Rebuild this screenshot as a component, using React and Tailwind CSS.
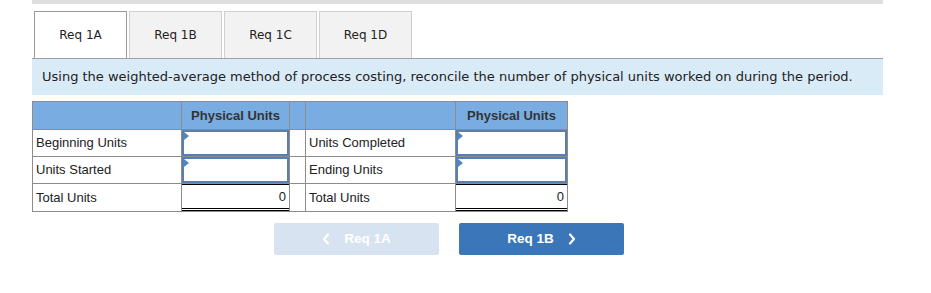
import React from "react";

const tabs = ["Req 1A", "Req 1B", "Req 1C", "Req 1D"];

const Chevron = ({ dir }) => (
  <svg width="8" height="12" viewBox="0 0 8 12" fill="none">
    <path
      d={dir === "left" ? "M6 1.5 L2 6 L6 10.5" : "M2 1.5 L6 6 L2 10.5"}
      stroke="white"
      strokeWidth="2.2"
      strokeLinecap="round"
      strokeLinejoin="round"
    />
  </svg>
);

const InputCell = () => (
  <td className="border border-[#8c8c8c] p-0 h-[27px]">
    <div className="relative h-full border-2 border-[#5a7fae] bg-white">
      <span className="absolute left-0 top-0 w-0 h-0 border-y-[4px] border-y-transparent border-l-[5px] border-l-[#4a86c8]" />
    </div>
  </td>
);

const TotalCell = () => (
  <td className="border border-[#8c8c8c] p-0">
    <div className="h-[27px] border-t border-black border-b-[3px] border-b-black [border-bottom-style:double] flex items-center justify-end pr-[3px]">
      0
    </div>
  </td>
);

export default function App() {
  return (
    <div className="w-[931px] h-[293px] bg-white pl-[32px] pr-[48px]">
      <div className="h-[4px] bg-[#dedede]" />

      {/* TABS */}
      <div className="flex gap-[2px] pl-[2px] mt-[7px] font-['DejaVu_Sans',sans-serif] text-[12px] text-[#222]">
        {tabs.map((t, i) => (
          <div
            key={t}
            className={`w-[93px] h-[47px] flex items-center justify-center border-x border-t ${
              i === 0
                ? "bg-white border-[#9a9a9a]"
                : "bg-[#f2f2f2] border-[#cfcfcf]"
            }`}
          >
            {t}
          </div>
        ))}
      </div>

      {/* INSTRUCTIONS */}
      <div className="h-[37px] bg-[#daebf8] border-t border-[#a0a0a0] flex items-center pl-[10px] font-['DejaVu_Sans',sans-serif] text-[13px] text-[#222]">
        Using the weighted-average method of process costing, reconcile the number of physical units worked on during the period.
      </div>

      {/* TABLE */}
      <table className="mt-[6px] border-collapse table-fixed font-['Liberation_Sans',Arial,sans-serif] text-[13px] text-[#222]">
        <colgroup>
          <col className="w-[149px]" />
          <col className="w-[108px]" />
          <col className="w-[16px]" />
          <col className="w-[150px]" />
          <col className="w-[112px]" />
        </colgroup>
        <thead>
          <tr className="h-[28px] bg-[#79ade2] text-[13px] text-[#333]">
            <th className="border border-[#8c8c8c]" />
            <th className="border border-[#8c8c8c] font-bold">Physical Units</th>
            <th className="border border-[#8c8c8c]" />
            <th className="border border-[#8c8c8c]" />
            <th className="border border-[#8c8c8c] font-bold">Physical Units</th>
          </tr>
        </thead>
        <tbody>
          <tr>
            <td className="border border-[#8c8c8c] px-[3px] h-[27px]">Beginning Units</td>
            <InputCell />
            <td className="border border-[#8c8c8c]" />
            <td className="border border-[#8c8c8c] px-[3px]">Units Completed</td>
            <InputCell />
          </tr>
          <tr>
            <td className="border border-[#8c8c8c] px-[3px] h-[27px]">Units Started</td>
            <InputCell />
            <td className="border border-[#8c8c8c]" />
            <td className="border border-[#8c8c8c] px-[3px]">Ending Units</td>
            <InputCell />
          </tr>
          <tr>
            <td className="border border-[#8c8c8c] px-[3px] h-[27px]">Total Units</td>
            <TotalCell />
            <td className="border border-[#8c8c8c]" />
            <td className="border border-[#8c8c8c] px-[3px]">Total Units</td>
            <TotalCell />
          </tr>
        </tbody>
      </table>

      {/* NAV BUTTONS */}
      <div className="mt-[11px] flex gap-[20px] pl-[242px] font-['Liberation_Sans',Arial,sans-serif] text-[13.5px] font-bold text-white">
        <button className="w-[165px] h-[32px] rounded-[2px] bg-[#d7e3f1] flex items-center justify-center gap-[14px]">
          <Chevron dir="left" />
          <span>Req 1A</span>
        </button>
        <button className="w-[165px] h-[32px] rounded-[2px] bg-[#3a76b8] flex items-center justify-center gap-[14px]">
          <span>Req 1B</span>
          <Chevron dir="right" />
        </button>
      </div>
    </div>
  );
}
